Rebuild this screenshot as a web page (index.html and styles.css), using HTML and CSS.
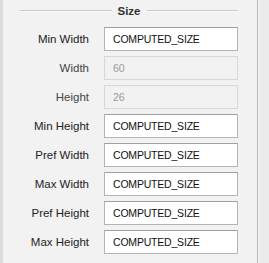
FILE: index.html
```html
<!DOCTYPE html>
<html lang="en">
<head>
    <meta charset="UTF-8">
    <title>Size properties</title>
    <link rel="stylesheet" href="styles.css">
</head>
<body>
    <div class="sheet">
        <div class="panel">
            <!-- Section header -->
            <div class="section-title">
                <span class="rule"></span>
                <span class="title">Size</span>
                <span class="rule"></span>
            </div>

            <div class="rows">
                <div class="row">
                    <label>Min Width</label>
                    <div class="field">COMPUTED_SIZE</div>
                </div>
                <div class="row">
                    <label class="muted">Width</label>
                    <div class="field disabled">60</div>
                </div>
                <div class="row">
                    <label class="muted">Height</label>
                    <div class="field disabled">26</div>
                </div>
                <div class="row">
                    <label>Min Height</label>
                    <div class="field">COMPUTED_SIZE</div>
                </div>
                <div class="row">
                    <label>Pref Width</label>
                    <div class="field">COMPUTED_SIZE</div>
                </div>
                <div class="row">
                    <label>Max Width</label>
                    <div class="field">COMPUTED_SIZE</div>
                </div>
                <div class="row">
                    <label>Pref Height</label>
                    <div class="field">COMPUTED_SIZE</div>
                </div>
                <div class="row">
                    <label>Max Height</label>
                    <div class="field">COMPUTED_SIZE</div>
                </div>
            </div>
        </div>
        <div class="gutter"></div>
    </div>
</body>
</html>
```

FILE: styles.css
```css
body {
    margin: 0;
    padding: 0;
    background-color: #ececec;
    font-family: "Liberation Sans", Arial, sans-serif;
}

.sheet {
    display: flex;
    height: 263px;
}

.panel {
    width: 254px;
    background-color: #f2f2f2;
    border-left: 3px solid #dcdcdc;
    border-right: 1px solid #b9b9b9;
}

.gutter {
    flex: 1;
    background-color: #ececec;
    border-left: 1px solid #f7f7f7;
}

/* Header with lines either side */
.section-title {
    display: flex;
    align-items: center;
    gap: 6px;
    margin-left: 17px;
    width: 218px;
    height: 21px;
}

.section-title .rule {
    flex: 1;
    height: 1px;
    background-color: #c9c9c9;
    box-shadow: 0 1px 0 #fafafa;
}

.section-title .title {
    font-size: 11.5px;
    font-weight: bold;
    color: #333;
}

.rows {
    display: flex;
    flex-direction: column;
    gap: 5px;
    padding-top: 6px;
}

.row {
    display: flex;
    align-items: center;
    height: 24px;
}

.row label {
    width: 86px;
    text-align: right;
    font-size: 11.5px;
    color: #222;
}

.row label.muted {
    color: #444;
}

.field {
    box-sizing: border-box;
    margin-left: 15px;
    width: 134px;
    height: 24px;
    padding: 0 0 0 8px;
    line-height: 22px;
    font-size: 10.5px;
    letter-spacing: -0.2px;
    color: #111;
    background-color: #fff;
    border: 1px solid #b4b4b4;
    border-top-color: #a0a0a0;
}

.field.disabled {
    color: #9a9a9a;
    background-color: #f2f2f2;
    border-color: #d8d8d8;
}
```
